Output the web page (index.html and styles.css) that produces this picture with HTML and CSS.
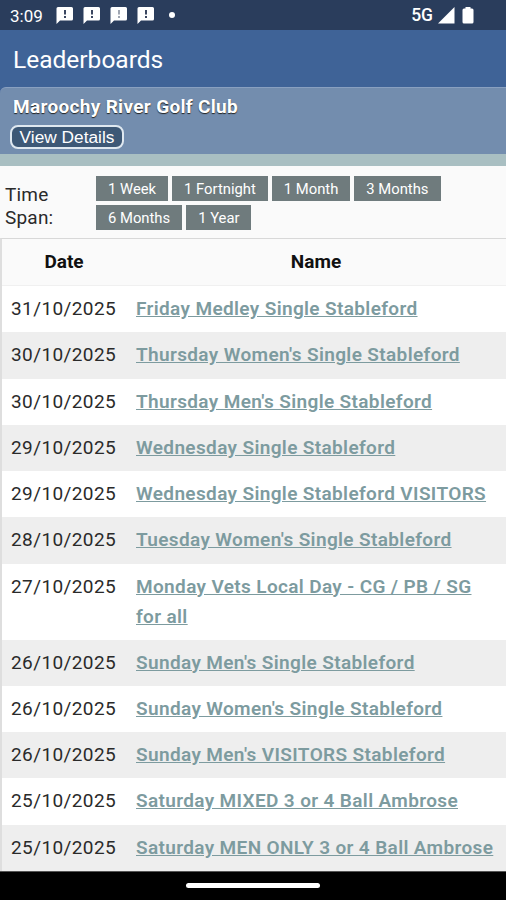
FILE: index.html
```
<!DOCTYPE html>
<html lang="en">
<head>
  <meta charset="UTF-8">
  <meta name="viewport" content="width=device-width, initial-scale=1.0">
  <title>Leaderboards</title>
  <link rel="stylesheet" href="styles.css">
</head>
<body>

  <!-- Status bar -->
  <div class="status">
    <span class="clock">3:09</span>
    <div class="notices">
      <svg class="notice" viewBox="0 0 17 17"><path d="M2 0h13.500q1.500 0 1.500 1.500v10.500q0 1.500-1.500 1.500H4L.5 17V1.500Q.5 0 2 0z"/><path class="mark" d="M8 3h2v4.500H8zM8 9h2v2H8z"/></svg>
      <svg class="notice" viewBox="0 0 17 17"><path d="M2 0h13.500q1.500 0 1.500 1.500v10.500q0 1.500-1.500 1.500H4L.5 17V1.500Q.5 0 2 0z"/><path class="mark" d="M8 3h2v4.500H8zM8 9h2v2H8z"/></svg>
      <svg class="notice faded" viewBox="0 0 17 17"><path d="M2 0h13.500q1.500 0 1.500 1.500v10.500q0 1.500-1.500 1.500H4L.5 17V1.500Q.5 0 2 0z"/><path class="mark" d="M8 3h2v4.500H8zM8 9h2v2H8z"/></svg>
      <svg class="notice" viewBox="0 0 17 17"><path d="M2 0h13.500q1.500 0 1.500 1.500v10.500q0 1.500-1.500 1.500H4L.5 17V1.500Q.5 0 2 0z"/><path class="mark" d="M8 3h2v4.500H8zM8 9h2v2H8z"/></svg>
    </div>
    <span class="dot"></span>
    <span class="network">5G</span>
    <svg class="signal" viewBox="0 0 17 17"><path d="M16.500 0v16.500H0z"/></svg>
    <svg class="battery" viewBox="0 0 12 17"><path d="M3.500 0h5v1.500h1.500q1.500 0 1.500 1.500v12q0 1.500-1.500 1.500H2Q.5 16.500.5 15V3Q.5 1.500 2 1.500h1.500z"/></svg>
  </div>

  <header class="topbar">Leaderboards</header>

  <section class="club">
    <div class="club-name">Maroochy River Golf Club</div>
    <button class="details">View Details</button>
  </section>

  <div class="timespan">
    <div class="label">Time Span:</div>
    <div class="spans">
      <button>1 Week</button>
      <button>1 Fortnight</button>
      <button>1 Month</button>
      <button>3 Months</button>
      <button>6 Months</button>
      <button>1 Year</button>
    </div>
  </div>

  <table class="board">
    <thead>
      <tr><th class="date">Date</th><th>Name</th></tr>
    </thead>
    <tbody>
      <tr><td>31/10/2025</td><td><a href="#">Friday Medley Single Stableford</a></td></tr>
      <tr><td>30/10/2025</td><td><a href="#">Thursday Women's Single Stableford</a></td></tr>
      <tr><td>30/10/2025</td><td><a href="#">Thursday Men's Single Stableford</a></td></tr>
      <tr><td>29/10/2025</td><td><a href="#">Wednesday Single Stableford</a></td></tr>
      <tr><td>29/10/2025</td><td><a href="#">Wednesday Single Stableford VISITORS</a></td></tr>
      <tr><td>28/10/2025</td><td><a href="#">Tuesday Women's Single Stableford</a></td></tr>
      <tr><td>27/10/2025</td><td><a href="#">Monday Vets Local Day - CG / PB / SG<br>for all</a></td></tr>
      <tr><td>26/10/2025</td><td><a href="#">Sunday Men's Single Stableford</a></td></tr>
      <tr><td>26/10/2025</td><td><a href="#">Sunday Women's Single Stableford</a></td></tr>
      <tr><td>26/10/2025</td><td><a href="#">Sunday Men's VISITORS Stableford</a></td></tr>
      <tr><td>25/10/2025</td><td><a href="#">Saturday MIXED 3 or 4 Ball Ambrose</a></td></tr>
      <tr><td>25/10/2025</td><td><a href="#">Saturday MEN ONLY 3 or 4 Ball Ambrose</a></td></tr>
    </tbody>
  </table>

  <!-- Gesture bar -->
  <footer class="navbar"><span class="handle"></span></footer>

</body>
</html>
```

FILE: styles.css
```
* {
  box-sizing: border-box;
}
body {
  margin: 0;
  height: 900px;
  display: flex;
  flex-direction: column;
  overflow: hidden;
  background-color: #fafafa;
  color: #2a2a2a;
  font-family: Roboto, sans-serif;
}
button {
  font-family: inherit;
  color: #fff;
  border: none;
  cursor: pointer;
}

/* Status bar */
.status {
  flex: none;
  display: flex;
  align-items: center;
  height: 30px;
  padding: 0 32px 0 10px;
  background-color: #2a3d5c;
  color: #fff;
}
.status svg {
  fill: #fff;
}
.clock {
  width: 46px;
  padding-top: 1px;
  font-size: 17px;
}
.notices {
  display: flex;
  gap: 10px;
}
.notice {
  width: 17px;
  height: 17px;
}
.notice .mark {
  fill: #3a4660;
}
.faded .mark {
  fill: #a0a6b2;
}
.dot {
  width: 6px;
  height: 6px;
  margin-left: 15px;
  border-radius: 50%;
  background-color: #fff;
}
.network {
  margin-left: auto;
  font-size: 17.5px;
  font-weight: 500;
}
.signal {
  width: 17px;
  height: 17px;
  margin-left: 5px;
}
.battery {
  width: 12px;
  height: 17px;
  margin-left: 7px;
}

.topbar {
  flex: none;
  height: 57px;
  padding-left: 13px;
  background-color: #3f6397;
  color: #fff;
  font-size: 24.5px;
  line-height: 60px;
}

/* Club banner */
.club {
  flex: none;
  height: 79px;
  padding: 7px 10px 0;
  border-top: 1px solid #89a0c0;
  border-bottom: 12px solid #a9bfc2;
  border-top-left-radius: 6px;
  background-color: #738dae;
  box-shadow: -6px -6px 0 #3f6397;
  clip-path: inset(0);
}
.club-name {
  padding-left: 3px;
  color: #fff;
  font-size: 19px;
  font-weight: 700;
  line-height: 24px;
  letter-spacing: 0.32px;
  text-shadow: 0 1px 1px #222;
}
.details {
  display: block;
  width: 114px;
  height: 24px;
  margin-top: 6px;
  padding: 0;
  border: 2px solid #dfe8f0;
  border-radius: 8px;
  background-color: #3d5876;
  font-family: "Liberation Sans", sans-serif;
  font-size: 17.3px;
  line-height: 18px;
}

/* Time span filter */
.timespan {
  flex: none;
  display: flex;
  height: 72px;
  padding: 10px 4px 0 5px;
}
.label {
  width: 91px;
  padding: 7px 35px 0 0;
  font-size: 19px;
  line-height: 23px;
  letter-spacing: 0.2px;
}
.spans {
  flex: 1;
  display: flex;
  flex-wrap: wrap;
  align-content: flex-start;
  gap: 4px;
}
.spans button {
  height: 25px;
  padding: 1px 12px 0;
  background-color: #6f7b7d;
  font-size: 14.8px;
}

/* Leaderboard table */
.board {
  flex: none;
  width: 100%;
  border-collapse: separate;
  border-spacing: 0;
  border-top: 1px solid #d8d8d8;
  border-left: 2px solid #dedede;
  background-color: #fff;
  font-size: 19px;
  line-height: 30px;
}
.board th {
  height: 47px;
  padding: 0;
  background-color: #fafafa;
  border-bottom: 1px solid #f0f0f0;
  color: #111;
  font-weight: 700;
}
.board .date {
  width: 124px;
}
.board td {
  height: 46.27px;
  padding: 8px 0 8px 10px;
  vertical-align: top;
  letter-spacing: 0.36px;
  white-space: nowrap;
}
.board td:first-child {
  padding-left: 9px;
  letter-spacing: 0.4px;
}
.board tbody tr:nth-child(even) {
  background-color: #eee;
}
.board a {
  color: #7d9b9f;
  font-weight: 600;
}

.navbar {
  flex: 1;
  padding-top: 11px;
  border-top: 1px solid #555;
  background-color: #000;
}
.handle {
  display: block;
  width: 134px;
  height: 5px;
  margin: 0 auto;
  border-radius: 3px;
  background-color: #fff;
}
```
